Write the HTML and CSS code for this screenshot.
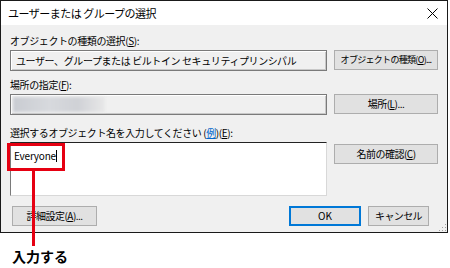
FILE: index.html
```html
<!DOCTYPE html>
<html lang="ja">
<head>
<meta charset="utf-8">
<link rel="stylesheet" href="styles.css">
</head>
<body>
<div class="page">
  <div class="window">
    <div class="titlebar">
      <span class="title">ユーザーまたは グループの選択</span>
      <svg class="close" width="11" height="11" viewBox="0 0 11 11"><path d="M0.5 0.5L10.5 10.5M10.5 0.5L0.5 10.5" stroke="#000" stroke-width="1" fill="none"/></svg>
    </div>
    <div class="content">
      <div class="grid">
        <div class="label l1">オブジェクトの種類の選択(<u>S</u>):</div>
        <div></div>
        <div class="field ro">ユーザー、グループまたは ビルトイン セキュリティプリンシパル</div>
        <div class="btn small">オブジェクトの種類(<u>O</u>)...</div>
        <div class="label l2">場所の指定(<u>F</u>):</div>
        <div></div>
        <div class="field ro"><div class="blur"></div></div>
        <div class="btn">場所(<u>L</u>)...</div>
        <div class="label l3">選択するオブジェクト名を入力してください (<a class="ex">例</a>)(<u>E</u>):</div>
        <div></div>
        <div class="area">Everyone<span class="caret"></span></div>
        <div class="btn check">名前の確認(<u>C</u>)</div>
      </div>
      <div class="bottom">
        <div class="btn adv">詳細設定(<u>A</u>)...</div>
        <div class="spacer"></div>
        <div class="btn ok">OK</div>
        <div class="btn cancel">キャンセル</div>
      </div>
    </div>
    <div class="grip"></div>
  </div>
  <div class="note">入力する</div>
  <div class="redbox"></div>
  <div class="redline"></div>
</div>
</body>
</html>
```
FILE: styles.css
```css
* { box-sizing: border-box; }
html, body { margin: 0; padding: 0; background: #fff; }
body { font-family: "Noto Sans CJK JP", "Noto Sans", sans-serif; color: #000; }
.page { position: relative; width: 450px; height: 268px; }
.window {
  position: relative;
  width: 448px;
  height: 233px;
  border: 1px solid #1a1a1a;
  background: #f0f0f0;
}
.titlebar {
  height: 24px;
  background: #fff;
  display: flex;
  align-items: center;
  justify-content: space-between;
  padding: 0 9px 0 7px;
}
.title { font-size: 11px; letter-spacing: -0.5px; white-space: nowrap; }
.content { padding: 9px 8px 7px 9px; }
.grid {
  display: grid;
  grid-template-columns: 317px 104px;
  column-gap: 7px;
  align-items: start;
}
.label { font-size: 10px; line-height: 14px; height: 14px; letter-spacing: -0.4px; margin-bottom: 2px; white-space: nowrap; }
.l2 { margin-top: 7px; }
.l3 { margin-top: 11px; }
.field {
  height: 21px;
  font-size: 10px;
  line-height: 19px;
  padding-left: 5px;
  letter-spacing: -0.4px;
  white-space: nowrap;
}
.ro {
  background: #f0f0f0;
  border: 1px solid #7a7a7a;
  box-shadow: inset 1px 1px 0 #fff, inset -1px -1px 0 #c8c8c8;
  position: relative;
  overflow: hidden;
}
.blur {
  position: absolute;
  left: 2px; top: 2px;
  width: 92px; height: 15px;
  background: linear-gradient(90deg, #c9ccd2, #d7d9dd 40%, #cfd1d6 70%, #e8e8e8);
  filter: blur(1.5px);
}
.btn {
  height: 20px;
  background: #e1e1e1;
  border: 1px solid #adadad;
  font-size: 10px;
  line-height: 18px;
  text-align: center;
  letter-spacing: -0.5px;
  white-space: nowrap;
  overflow: hidden;
}
.btn.small { font-size: 9px; letter-spacing: -0.7px; }
.btn u, .label u { text-decoration: underline; }
.check { margin-top: 2px; }
.area {
  height: 54px;
  background: #fff;
  border-top: 1px solid #222;
  border-left: 1px solid #7a7a7a;
  border-right: 1px solid #d8d8d8;
  border-bottom: 1px solid #d8d8d8;
  font-size: 10px;
  line-height: 14px;
  padding: 6px 0 0 3px;
  letter-spacing: -0.2px;
}
.caret { display: inline-block; width: 1px; height: 12px; background: #000; vertical-align: -2px; }
.ex { color: #0066cc; text-decoration: underline; }
.bottom { display: flex; margin-top: 10px; gap: 7px; padding-left: 2px; }
.spacer { flex: 1; }
.adv { width: 85px; }
.ok { width: 72px; border: 2px solid #0078d7; line-height: 16px; letter-spacing: 0; }
.cancel { width: 61px; margin-right: 10px; letter-spacing: -0.6px; }
.grip {
  position: absolute;
  right: 1px; bottom: 1px;
  width: 8px; height: 8px;
  background-image: radial-gradient(circle, #a0a0a0 0.8px, transparent 1px);
  background-size: 3px 3px;
  clip-path: polygon(100% 0, 100% 100%, 0 100%);
}
.note {
  font-size: 14px;
  font-weight: bold;
  margin: 13px 0 0 12px;
  line-height: 20px;
}
.redbox {
  position: absolute;
  left: 7px; top: 143px;
  width: 58px; height: 28px;
  border: 3px solid #e60012;
}
.redline {
  position: absolute;
  left: 32px; top: 170px;
  width: 3px; height: 76px;
  background: #e60012;
}
```
